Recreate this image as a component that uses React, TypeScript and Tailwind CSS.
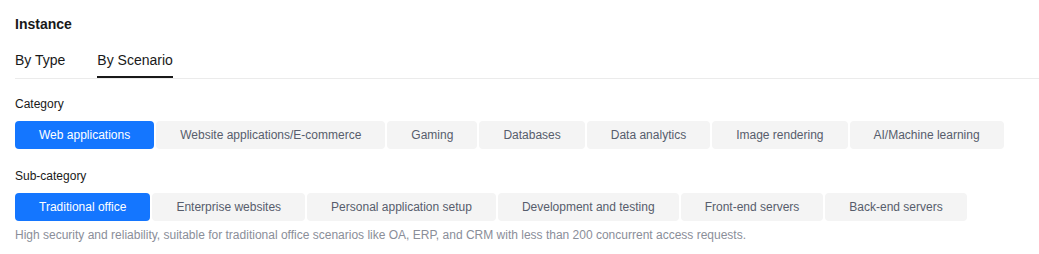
import * as React from "react";

const categories = [
  "Web applications",
  "Website applications/E-commerce",
  "Gaming",
  "Databases",
  "Data analytics",
  "Image rendering",
  "AI/Machine learning",
];

const subCategories = [
  "Traditional office",
  "Enterprise websites",
  "Personal application setup",
  "Development and testing",
  "Front-end servers",
  "Back-end servers",
];

function OptionGroup({
  items,
  active,
  onPick,
}: {
  items: string[];
  active: number;
  onPick: (i: number) => void;
}) {
  return (
    <div className="flex flex-wrap gap-[2px]">
      {items.map((label, i) => (
        <button
          key={label}
          onClick={() => onPick(i)}
          className={
            i === active
              ? "h-[28px] px-6 rounded-[4px] text-[12px] leading-[18px] bg-[#1476ff] text-white"
              : "h-[28px] px-6 rounded-[4px] text-[12px] leading-[18px] bg-[#f4f4f4] text-[#575d6c]"
          }
        >
          {label}
        </button>
      ))}
    </div>
  );
}

export default function App() {
  const [tab, setTab] = React.useState(1);
  const [category, setCategory] = React.useState(0);
  const [sub, setSub] = React.useState(0);

  return (
    <div
      className="bg-white pl-[15px] pt-[13px] text-[#191919]"
      style={{ fontFamily: '"Liberation Sans", Arial, sans-serif' }}
    >
      <h3 className="text-[14px] leading-[22px] font-bold">Instance</h3>

      <div className="mt-[14px] flex border-b border-[#ebebeb]">
        {["By Type", "By Scenario"].map((t, i) => (
          <button
            key={t}
            onClick={() => setTab(i)}
            className={
              i === tab
                ? "mr-8 pb-[5px] text-[14px] leading-[22px] border-b-2 border-[#191919] text-[#191919]"
                : "mr-8 pb-[5px] text-[14px] leading-[22px] border-b-2 border-transparent text-[#191919]"
            }
          >
            {t}
          </button>
        ))}
      </div>

      <div className="mt-[16px] mb-[8px] text-[12px] leading-[18px]">Category</div>
      <OptionGroup items={categories} active={category} onPick={setCategory} />

      <div className="mt-[18px] mb-[8px] text-[12px] leading-[18px]">Sub-category</div>
      <OptionGroup items={subCategories} active={sub} onPick={setSub} />

      <p className="mt-[5px] pb-[10px] text-[12px] leading-[18px] text-[#8a8e99]">
        High security and reliability, suitable for traditional office scenarios like OA, ERP, and CRM with less than 200 concurrent access requests.
      </p>
    </div>
  );
}
